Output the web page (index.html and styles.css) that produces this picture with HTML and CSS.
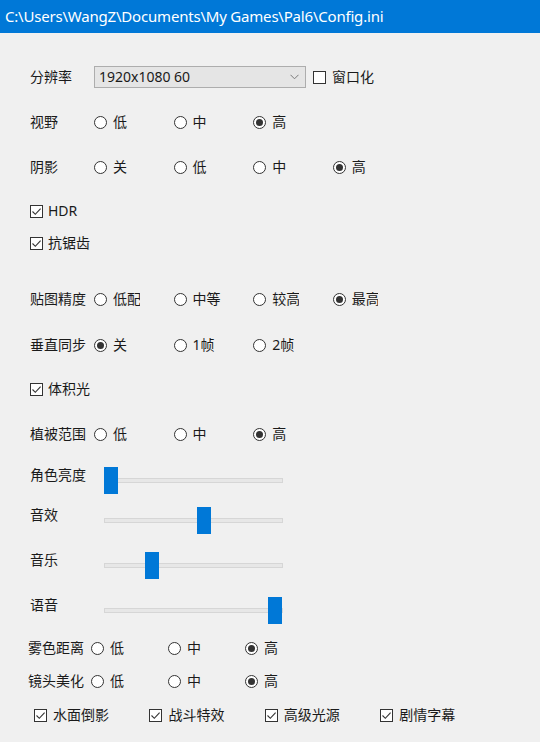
FILE: index.html
```html
<!DOCTYPE html>
<html lang="zh-CN">
<head>
<meta charset="utf-8">
<title>Config</title>
<link rel="stylesheet" href="styles.css">
</head>
<body>
<div class="window">
  <div class="titlebar">C:\Users\WangZ\Documents\My Games\Pal6\Config.ini</div>
  <div class="content">

    <div class="row">
      <span class="label">分辨率</span>
      <div class="select">
        <span class="select-text">1920x1080 60</span>
        <svg class="chevron" width="9" height="6" viewBox="0 0 9 6"><polyline points="0.5,0.8 4.5,4.8 8.5,0.8" fill="none" stroke="#7a7a7a" stroke-width="1"/></svg>
      </div>
      <label class="check check-win"><span class="box"></span>窗口化</label>
    </div>

    <div class="row mt21">
      <span class="label">视野</span>
      <span class="opt"><span class="radio"></span>低</span>
      <span class="opt"><span class="radio"></span>中</span>
      <span class="opt"><span class="radio on"></span>高</span>
    </div>

    <div class="row mt21">
      <span class="label">阴影</span>
      <span class="opt"><span class="radio"></span>关</span>
      <span class="opt"><span class="radio"></span>低</span>
      <span class="opt"><span class="radio"></span>中</span>
      <span class="opt"><span class="radio on"></span>高</span>
    </div>

    <div class="row mt20">
      <label class="check"><span class="box on"><svg width="11" height="11" viewBox="0 0 11 11"><polyline points="1.5,5.5 4.3,8.3 9.6,2.6" fill="none" stroke="#333" stroke-width="1.1"/></svg></span>HDR</label>
    </div>

    <div class="row mt8">
      <label class="check"><span class="box on"><svg width="11" height="11" viewBox="0 0 11 11"><polyline points="1.5,5.5 4.3,8.3 9.6,2.6" fill="none" stroke="#333" stroke-width="1.1"/></svg></span>抗锯齿</label>
    </div>

    <div class="row mt32">
      <span class="label">贴图精度</span>
      <span class="opt"><span class="radio"></span><span class="clip">低配</span></span>
      <span class="opt"><span class="radio"></span>中等</span>
      <span class="opt"><span class="radio"></span><span class="clip">较高</span></span>
      <span class="opt"><span class="radio on"></span><span class="clip">最高</span></span>
    </div>

    <div class="row mt22">
      <span class="label">垂直同步</span>
      <span class="opt"><span class="radio on"></span>关</span>
      <span class="opt"><span class="radio"></span>1帧</span>
      <span class="opt"><span class="radio"></span>2帧</span>
    </div>

    <div class="row mt20">
      <label class="check"><span class="box on"><svg width="11" height="11" viewBox="0 0 11 11"><polyline points="1.5,5.5 4.3,8.3 9.6,2.6" fill="none" stroke="#333" stroke-width="1.1"/></svg></span>体积光</label>
    </div>

    <div class="row mt21">
      <span class="label">植被范围</span>
      <span class="opt"><span class="radio"></span>低</span>
      <span class="opt"><span class="radio"></span>中</span>
      <span class="opt"><span class="radio on"></span>高</span>
    </div>

    <div class="srow mt21">
      <span class="slabel">角色亮度</span>
      <div class="slider"><div class="track"></div><div class="thumb" style="left:0px"></div></div>
    </div>

    <div class="srow mt13">
      <span class="slabel">音效</span>
      <div class="slider"><div class="track"></div><div class="thumb" style="left:93px"></div></div>
    </div>

    <div class="srow mt18">
      <span class="slabel">音乐</span>
      <div class="slider"><div class="track"></div><div class="thumb" style="left:41px"></div></div>
    </div>

    <div class="srow mt18">
      <span class="slabel">语音</span>
      <div class="slider"><div class="track"></div><div class="thumb" style="left:164px"></div></div>
    </div>

    <div class="row row-low mt12">
      <span class="label label-low">雾色距离</span>
      <span class="opt opt-low"><span class="radio"></span>低</span>
      <span class="opt opt-low"><span class="radio"></span>中</span>
      <span class="opt opt-low"><span class="radio on"></span>高</span>
    </div>

    <div class="row row-low mt9">
      <span class="label label-low">镜头美化</span>
      <span class="opt opt-low"><span class="radio"></span>低</span>
      <span class="opt opt-low"><span class="radio"></span>中</span>
      <span class="opt opt-low"><span class="radio on"></span>高</span>
    </div>

    <div class="row row-checks mt10">
      <label class="check check-wide"><span class="box on"><svg width="11" height="11" viewBox="0 0 11 11"><polyline points="1.5,5.5 4.3,8.3 9.6,2.6" fill="none" stroke="#333" stroke-width="1.1"/></svg></span>水面倒影</label>
      <label class="check check-wide"><span class="box on"><svg width="11" height="11" viewBox="0 0 11 11"><polyline points="1.5,5.5 4.3,8.3 9.6,2.6" fill="none" stroke="#333" stroke-width="1.1"/></svg></span>战斗特效</label>
      <label class="check check-wide"><span class="box on"><svg width="11" height="11" viewBox="0 0 11 11"><polyline points="1.5,5.5 4.3,8.3 9.6,2.6" fill="none" stroke="#333" stroke-width="1.1"/></svg></span>高级光源</label>
      <label class="check check-wide"><span class="box on"><svg width="11" height="11" viewBox="0 0 11 11"><polyline points="1.5,5.5 4.3,8.3 9.6,2.6" fill="none" stroke="#333" stroke-width="1.1"/></svg></span>剧情字幕</label>
    </div>

  </div>
</div>
</body>
</html>
```

FILE: styles.css
```css
html, body {
  margin: 0;
  padding: 0;
  background: #f0f0f0;
}

.window {
  width: 540px;
  height: 742px;
  overflow: hidden;
  background: #f0f0f0;
  font-family: "Noto Sans", "Noto Sans CJK SC", sans-serif;
  font-size: 14px;
  color: #1a1a1a;
}

.titlebar {
  height: 33px;
  background: #0078d7;
  color: #ffffff;
  font-size: 15px;
  line-height: 33px;
  padding-left: 5px;
  white-space: nowrap;
  letter-spacing: -0.2px;
}

.content {
  padding: 32px 0 0 30px;
}

.row {
  display: flex;
  align-items: center;
  height: 24px;
  line-height: 20px;
}

.mt8 { margin-top: 8px; }
.mt9 { margin-top: 9px; }
.mt10 { margin-top: 10px; }
.mt12 { margin-top: 12px; }
.mt13 { margin-top: 13px; }
.mt18 { margin-top: 18px; }
.mt20 { margin-top: 20px; }
.mt21 { margin-top: 21px; }
.mt22 { margin-top: 22px; }
.mt32 { margin-top: 32px; }

.label {
  width: 64px;
  flex: none;
  white-space: nowrap;
}

.select {
  width: 200px;
  height: 20px;
  border: 1px solid #adadad;
  background: #e5e5e5;
  display: flex;
  align-items: center;
  justify-content: space-between;
  padding: 0 6px 0 4px;
  box-sizing: content-box;
  margin-right: 7px;
}

.select-text {
  font-size: 14px;
}

.chevron {
  display: block;
}

.opt {
  width: 79.6px;
  flex: none;
  display: flex;
  align-items: center;
  white-space: nowrap;
}

.radio {
  width: 13px;
  height: 13px;
  box-sizing: border-box;
  border: 1px solid #333333;
  border-radius: 50%;
  background: #ffffff;
  margin-right: 6px;
  display: flex;
  align-items: center;
  justify-content: center;
  flex: none;
}

.radio.on::after {
  content: "";
  width: 7px;
  height: 7px;
  border-radius: 50%;
  background: #333333;
}

.clip {
  display: inline-block;
  width: 26.5px;
  overflow: hidden;
  white-space: nowrap;
}

.check {
  display: flex;
  align-items: center;
  white-space: nowrap;
}

.box {
  width: 13px;
  height: 13px;
  box-sizing: border-box;
  border: 1px solid #333333;
  background: #ffffff;
  margin-right: 5px;
  flex: none;
  display: flex;
  align-items: center;
  justify-content: center;
}

.box svg {
  display: block;
}

.check-win .box {
  margin-right: 6px;
}

.srow {
  display: flex;
  align-items: flex-start;
  height: 27px;
}

.slabel {
  width: 74px;
  flex: none;
  line-height: 16px;
  white-space: nowrap;
}

.slider {
  position: relative;
  width: 179px;
  height: 27px;
  display: flex;
  align-items: center;
}

.track {
  width: 100%;
  height: 5px;
  box-sizing: border-box;
  background: #e7e7e7;
  border: 1px solid #d6d6d6;
}

.thumb {
  position: absolute;
  top: 0;
  width: 14px;
  height: 27px;
  background: #0078d7;
}

.row-low {
  margin-left: -2px;
}

.label-low {
  width: 63px;
}

.opt-low {
  width: 77px;
}

.row-checks {
  margin-left: 4px;
}

.check-wide {
  width: 115.4px;
  flex: none;
}

.check-wide .box {
  margin-right: 6px;
}
```
